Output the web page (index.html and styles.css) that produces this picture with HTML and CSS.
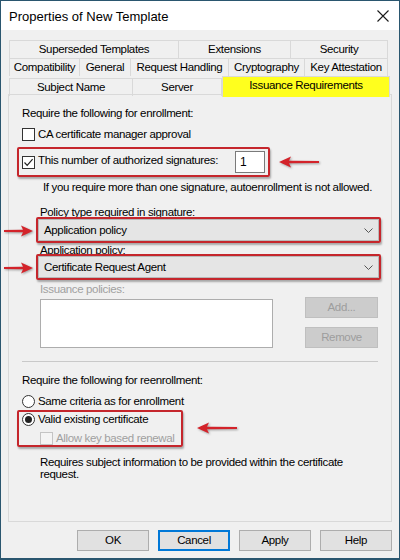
FILE: index.html
```html
<!DOCTYPE html>
<html lang="en">

<head>
    <meta charset="UTF-8">
    <title>Properties of New Template</title>
    <link rel="stylesheet" href="styles.css">
</head>

<body>
<div class="window">
    <div class="titlebar">
        <span class="title">Properties of New Template</span>
        <svg class="close" width="12" height="12" viewBox="0 0 12 12">
            <path d="M0.5 0.5 L11.5 11.5 M11.5 0.5 L0.5 11.5" stroke="#1a1a1a" stroke-width="1.1" fill="none"/>
        </svg>
    </div>

    <div class="dialog">
        <!-- tab strip, three rows -->
        <div class="tabs">
            <div class="tab-row row-1">
                <div class="tab">Superseded Templates</div>
                <div class="tab">Extensions</div>
                <div class="tab">Security</div>
            </div>
            <div class="tab-row row-2">
                <div class="tab">Compatibility</div>
                <div class="tab">General</div>
                <div class="tab">Request Handling</div>
                <div class="tab">Cryptography</div>
                <div class="tab">Key Attestation</div>
            </div>
            <div class="tab-row row-3">
                <div class="tab">Subject Name</div>
                <div class="tab">Server</div>
                <div class="tab active">Issuance Requirements</div>
            </div>
        </div>

        <div class="panel">
            <div class="line heading">Require the following for enrollment:</div>

            <div class="line check-row first-check">
                <span class="checkbox"></span>
                <span>CA certificate manager approval</span>
            </div>

            <div class="mark-row">
                <div class="redbox sig-box">
                    <span class="checkbox checked">
                        <svg width="11" height="11" viewBox="0 0 11 11"><path d="M1.5 5.5 L4.2 8.3 L9.6 2.2" stroke="#222" stroke-width="1.2" fill="none"/></svg>
                    </span>
                    <span class="sig-label">This number of authorized signatures:</span>
                    <span class="num-input">1</span>
                </div>
                <svg class="arrow arrow-left" width="44" height="14" viewBox="0 0 44 14">
                    <path d="M2 7 L14 1.5 L12 5.8 L42 6 L42 8 L12 8.2 L14 12.5 Z" fill="#d3232a"/>
                </svg>
            </div>

            <div class="line note">If you require more than one signature, autoenrollment is not allowed.</div>

            <div class="field-label policy-label">Policy type required in signature:</div>
            <div class="redbox combo-box">
                <svg class="arrow arrow-right" width="32" height="14" viewBox="0 0 32 14">
                    <path d="M30 7 L18 1.5 L20 5.8 L1 6 L1 8 L20 8.2 L18 12.5 Z" fill="#d3232a"/>
                </svg>
                <div class="combo">
                    <span>Application policy</span>
                    <svg width="9" height="5" viewBox="0 0 9 5"><path d="M0.5 0.5 L4.5 4.5 L8.5 0.5" stroke="#555" stroke-width="1" fill="none"/></svg>
                </div>
            </div>

            <div class="field-label app-label">Application policy:</div>
            <div class="redbox combo-box">
                <svg class="arrow arrow-right" width="32" height="14" viewBox="0 0 32 14">
                    <path d="M30 7 L18 1.5 L20 5.8 L1 6 L1 8 L20 8.2 L18 12.5 Z" fill="#d3232a"/>
                </svg>
                <div class="combo">
                    <span>Certificate Request Agent</span>
                    <svg width="9" height="5" viewBox="0 0 9 5"><path d="M0.5 0.5 L4.5 4.5 L8.5 0.5" stroke="#555" stroke-width="1" fill="none"/></svg>
                </div>
            </div>

            <div class="line field-label disabled issuance-label">Issuance policies:</div>
            <div class="list-row">
                <div class="listbox"></div>
                <div class="list-buttons">
                    <div class="btn disabled-btn">Add...</div>
                    <div class="btn disabled-btn">Remove</div>
                </div>
            </div>

            <div class="separator"></div>

            <div class="line heading reenroll">Require the following for reenrollment:</div>

            <div class="line check-row radio-row">
                <span class="radio"></span>
                <span>Same criteria as for enrollment</span>
            </div>

            <div class="mark-row">
                <div class="redbox renew-box">
                    <div class="check-row inner-row">
                        <span class="radio selected"></span>
                        <span>Valid existing certificate</span>
                    </div>
                    <div class="check-row inner-row allow-row disabled">
                        <span class="checkbox off"></span>
                        <span>Allow key based renewal</span>
                    </div>
                </div>
                <svg class="arrow arrow-left renew-arrow" width="44" height="14" viewBox="0 0 44 14">
                    <path d="M2 7 L14 1.5 L12 5.8 L42 6 L42 8 L12 8.2 L14 12.5 Z" fill="#d3232a"/>
                </svg>
            </div>

            <div class="requires">Requires subject information to be provided within the certificate request.</div>
        </div>

        <div class="buttons">
            <div class="btn">OK</div>
            <div class="btn default">Cancel</div>
            <div class="btn">Apply</div>
            <div class="btn">Help</div>
        </div>
    </div>
</div>
</body>

</html>
```

FILE: styles.css
```css
body {
    margin: 0;
    font-family: "Liberation Sans", Arial, sans-serif;
    font-size: 11.5px;
    letter-spacing: -0.35px;
    color: #000;
    background-color: #f0f0f0;
}

.window {
    width: 400px;
    height: 560px;
    box-sizing: border-box;
    border: 1px solid #2a566f;
    border-bottom-width: 2px;
    background-color: #f0f0f0;
    display: flex;
    flex-direction: column;
}

.titlebar {
    height: 29px;
    background-color: #fff;
    display: flex;
    align-items: center;
    justify-content: space-between;
    padding: 0 10px 0 8px;
}

.title {
    font-size: 13px;
    letter-spacing: 0;
    margin-top: 1px;
}

.close {
    margin-top: 1px;
}

.dialog {
    padding: 10px 7px 0 7px;
}

/* tabs */
.tabs {
    margin-left: 1px;
}

.tab-row {
    display: grid;
    height: 18px;
}

.row-1 {
    grid-template-columns: 170px 112px 97px;
}

.row-2 {
    grid-template-columns: 71px 51px 98px 76px 83px;
}

.row-3 {
    grid-template-columns: 124px 89px 168px;
    align-items: end;
}

.tab {
    height: 18px;
    box-sizing: border-box;
    border: 1px solid #d9d9d9;
    border-left: none;
    border-bottom: none;
    text-align: center;
    line-height: 17px;
    white-space: nowrap;
}

.tab:first-child {
    border-left: 1px solid #d9d9d9;
}

.tab.active {
    height: 21px;
    margin-bottom: -1px;
    background-color: #ffff1e;
    border: 1px solid #d9d9d9;
    border-bottom: none;
    line-height: 17px;
    padding-bottom: 2px;
    position: relative;
    z-index: 1;
}

/* panel */
.panel {
    height: 428px;
    box-sizing: border-box;
    border: 1px solid #d9d9d9;
    padding: 10px 0 0 13px;
}

.line {
    line-height: 16px;
    height: 16px;
    white-space: nowrap;
}

.check-row {
    display: flex;
    align-items: center;
    gap: 3px;
}

.first-check {
    margin-top: 5px;
}

.checkbox {
    width: 13px;
    height: 13px;
    box-sizing: border-box;
    border: 1px solid #333;
    background-color: #fff;
    display: inline-flex;
    align-items: center;
    justify-content: center;
    flex: none;
}

.checkbox.off {
    border-color: #c4c4c4;
    background-color: #f4f4f4;
}

.radio {
    width: 13px;
    height: 13px;
    box-sizing: border-box;
    border: 1px solid #333;
    border-radius: 50%;
    background-color: #fff;
    display: inline-flex;
    align-items: center;
    justify-content: center;
    flex: none;
}

.radio.selected::after {
    content: "";
    width: 7px;
    height: 7px;
    border-radius: 50%;
    background-color: #222;
}

.redbox {
    border: 2px solid #c5262c;
    border-radius: 2px;
    box-shadow: 1px 2px 2px rgba(0, 0, 0, 0.3);
    box-sizing: border-box;
}

.mark-row {
    display: flex;
    align-items: center;
    margin-left: -5px;
}

.sig-box {
    margin-top: 5px;
    width: 253px;
    height: 30px;
    display: flex;
    align-items: center;
    padding: 0 3px;
    gap: 3px;
}

.sig-label {
    flex: 1;
    margin-bottom: 4px;
    white-space: nowrap;
}

.num-input {
    width: 30px;
    height: 22px;
    box-sizing: border-box;
    border: 1px solid #7a7a7a;
    background-color: #fff;
    padding-left: 4px;
    line-height: 20px;
    font-size: 12px;
}

.arrow {
    filter: drop-shadow(1px 1px 1px rgba(0, 0, 0, 0.35));
}

.arrow-left {
    margin-left: 7px;
    margin-top: 5px;
}

.note {
    margin-top: 2px;
    margin-left: 21px;
}

.field-label {
    margin-left: 18px;
    line-height: 16px;
    white-space: nowrap;
}

.policy-label {
    margin-top: 9px;
    height: 13px;
}

.app-label {
    height: 11px;
    margin-top: 0;
    line-height: 14px;
}

.combo-box {
    margin-left: 14px;
    width: 345px;
    height: 26px;
    position: relative;
}

.arrow-right {
    position: absolute;
    left: -35px;
    top: 5px;
}

.combo {
    height: 22px;
    box-sizing: border-box;
    border: 1px solid #b9b9b9;
    background-color: #e5e5e5;
    display: flex;
    align-items: center;
    justify-content: space-between;
    padding: 0 5px 0 5px;
}

.disabled {
    color: #a0a0a0;
}

.issuance-label {
    margin-top: 1px;
}

.list-row {
    display: flex;
    margin-left: 18px;
    gap: 32px;
}

.listbox {
    margin-top: 2px;
    width: 233px;
    height: 49px;
    box-sizing: border-box;
    border: 1px solid #adadad;
    background-color: #fff;
}

.list-buttons {
    display: flex;
    flex-direction: column;
    gap: 9px;
}

.btn {
    width: 73px;
    height: 21px;
    box-sizing: border-box;
    border: 1px solid #adadad;
    background-color: #e1e1e1;
    text-align: center;
    line-height: 19px;
}

.disabled-btn {
    background-color: #cccccc;
    border-color: #bfbfbf;
    color: #9d9d9d;
}

.separator {
    margin-top: 13px;
    width: 356px;
    height: 1px;
    background-color: #c9c9c9;
}

.reenroll {
    margin-top: 10px;
}

.radio-row {
    margin-top: 5px;
}

.renew-box {
    margin-top: 1px;
    width: 166px;
    height: 37px;
    padding-left: 3px;
}

.inner-row {
    height: 14px;
    line-height: 14px;
    white-space: nowrap;
}

.allow-row {
    margin-top: 5px;
    margin-left: 18px;
}

.renew-arrow {
    margin-left: 12px;
    margin-top: 0;
}

.requires {
    margin-top: 9px;
    margin-left: 18px;
    width: 330px;
    line-height: 12px;
}

/* dialog buttons */
.buttons {
    display: flex;
    justify-content: flex-end;
    gap: 9px;
    margin-top: 8px;
}

.buttons .btn {
    width: 72px;
}

.btn.default {
    border: 2px solid #0078d7;
    line-height: 17px;
}
```
